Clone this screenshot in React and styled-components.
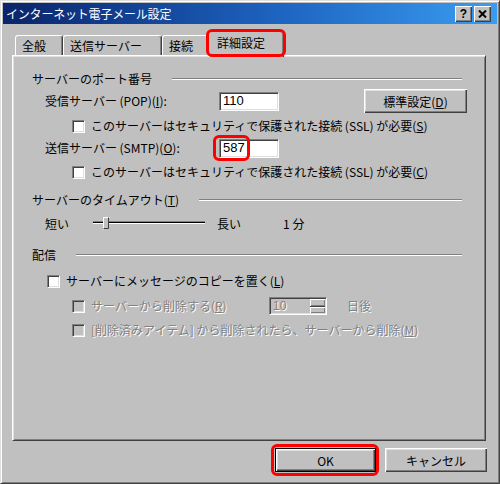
import React from 'react';
import styled, { createGlobalStyle } from 'styled-components';

const FONT = `"Noto Sans CJK JP", "Noto Sans", sans-serif`;

const GlobalStyle = createGlobalStyle`
  html, body {
    margin: 0;
    padding: 0;
    background: #c0c0c0;
  }
  body {
    font-family: ${FONT};
    font-size: 12px;
  }
`;

const Window = styled.div`
  box-sizing: border-box;
  width: 500px;
  height: 484px;
  background: #c0c0c0;
  border: 1px solid;
  border-color: #dfdfdf #404040 #404040 #dfdfdf;
  box-shadow: inset 1px 1px #fff, inset -1px -1px #808080;
  padding: 2px;
  display: flex;
  flex-direction: column;
  font-family: ${FONT};
  font-size: 12px;
  line-height: 16px;
  color: #000;
`;

const TitleBar = styled.div`
  height: 21px;
  flex-shrink: 0;
  display: flex;
  align-items: center;
  gap: 2px;
  padding: 0 6px 0 3px;
  background: linear-gradient(90deg, #0a246a 0%, #1d63c0 55%, #3a9cf0 100%);
  color: #fff;
`;

const TitleText = styled.span`
  flex: 1;
  letter-spacing: -0.2px;
`;

const CaptionButton = styled.div`
  box-sizing: border-box;
  width: 17px;
  height: 16px;
  display: flex;
  align-items: center;
  justify-content: center;
  background: #c0c0c0;
  color: #000;
  font-family: "Liberation Sans", Arial, sans-serif;
  font-weight: bold;
  font-size: 12px;
  box-shadow: inset 1px 1px #fff, inset -1px -1px #404040, inset -2px -2px #808080;
`;

const Content = styled.div`
  flex: 1;
  display: flex;
  flex-direction: column;
  padding: 7px 11px 0 9px;
`;

const TabRow = styled.div`
  position: relative;
  z-index: 1;
  height: 26px;
  margin-bottom: -2px;
  display: flex;
  align-items: flex-end;
  padding-left: 3px;
`;

const Tab = styled.div`
  position: relative;
  box-sizing: border-box;
  width: ${p => p.$w}px;
  height: ${p => (p.$active ? 26 : 20)}px;
  margin: 0 ${p => (p.$active ? -2 : 0)}px ${p => (p.$active ? 0 : 2)}px;
  padding: 0 0 ${p => (p.$active ? 4 : 0)}px ${p => (p.$active ? 8 : 6)}px;
  display: flex;
  align-items: center;
  background: #c0c0c0;
  border: 1px solid;
  border-bottom: none;
  border-color: #fff #404040 transparent #fff;
  border-radius: 3px 3px 0 0;
  box-shadow: inset -1px 0 #808080;
  white-space: nowrap;
  z-index: ${p => (p.$active ? 2 : 1)};

  ${p => p.$marked && `
    &::after {
      content: '';
      position: absolute;
      inset: -3px -3px 0 -3px;
      border: 3px solid #ff0000;
      border-radius: 6px;
    }
  `}
`;

const Panel = styled.div`
  box-sizing: border-box;
  height: 386px;
  flex-shrink: 0;
  display: flex;
  flex-direction: column;
  padding: 15px 23px 0 19px;
  border: 1px solid;
  border-color: #fff #404040 #404040 #fff;
  box-shadow: inset 1px 1px #dfdfdf, inset -1px -1px #808080;
`;

const GroupHeader = styled.div`
  display: flex;
  align-items: center;
  gap: 20px;
  height: 16px;
  margin-top: ${p => p.$mt || 0}px;
  white-space: nowrap;
`;

const Etch = styled.div`
  flex: 1;
  border-top: 1px solid #808080;
  border-bottom: 1px solid #fff;
`;

const Row = styled.div`
  display: flex;
  align-items: center;
  height: ${p => p.$h || 16}px;
  margin-top: ${p => p.$mt || 0}px;
  padding-left: ${p => p.$indent || 0}px;
  white-space: nowrap;
  color: ${p => (p.$disabled ? '#808080' : '#000')};
  text-shadow: ${p => (p.$disabled ? '1px 1px 0 #fff' : 'none')};
`;

const Label = styled.span`
  width: ${p => (p.$w ? `${p.$w}px` : 'auto')};
  flex-shrink: 0;
`;

const TextBox = styled.div`
  box-sizing: border-box;
  width: 60px;
  height: 19px;
  display: flex;
  align-items: center;
  padding-left: 3px;
  background: #fff;
  border: 1px solid;
  border-color: #808080 #fff #fff #808080;
  box-shadow: inset 1px 1px #404040, inset -1px -1px #dfdfdf;
  font-family: "Liberation Sans", Arial, sans-serif;
  font-size: 13px;
`;

const Highlight = styled.span`
  position: relative;
  display: inline-flex;

  &::after {
    content: '';
    position: absolute;
    inset: ${p => p.$inset};
    border: 3px solid #ff0000;
    border-radius: 6px;
    pointer-events: none;
  }
`;

const Button = styled.button`
  box-sizing: border-box;
  width: ${p => p.$w}px;
  height: 24px;
  margin: 0;
  padding: 0;
  background: #c0c0c0;
  color: #000;
  font-family: ${FONT};
  font-size: 12px;
  border: ${p => (p.$default ? '1px solid #000' : 'none')};
  box-shadow: inset 1px 1px #fff, inset -1px -1px #404040, inset -2px -2px #808080, inset 2px 2px #dfdfdf;
`;

const SideButton = styled(Button)`
  margin-left: auto;
  margin-right: -5px;
`;

const Check = styled.span`
  box-sizing: border-box;
  width: 13px;
  height: 13px;
  flex-shrink: 0;
  margin-right: 6px;
  background: ${p => (p.$disabled ? '#c0c0c0' : '#fff')};
  border: 1px solid;
  border-color: #808080 #fff #fff #808080;
  box-shadow: inset 1px 1px #404040, inset -1px -1px #dfdfdf;
`;

const SliderTrack = styled.svg`
  margin: 0 12px 0 24px;
  flex-shrink: 0;
`;

const Value = styled.span`
  margin-left: 42px;
`;

const Spin = styled.div`
  box-sizing: border-box;
  width: 58px;
  height: 18px;
  display: flex;
  background: #c0c0c0;
  border: 1px solid;
  border-color: #808080 #fff #fff #808080;
  box-shadow: inset 1px 1px #404040, inset -1px -1px #dfdfdf;
  padding: 1px 1px 1px 3px;
`;

const SpinText = styled.span`
  flex: 1;
  font-family: "Liberation Sans", Arial, sans-serif;
  font-size: 12px;
  line-height: 14px;
`;

const SpinButtons = styled.div`
  width: 15px;
  display: flex;
  flex-direction: column;
  background: #404040;
  gap: 1px;
`;

const SpinArrow = styled.div`
  flex: 1;
  background: #c0c0c0;
  box-shadow: inset 1px 1px #fff, inset -1px -1px #808080;
`;

const After = styled.span`
  margin-left: 20px;
`;

const Footer = styled.div`
  display: flex;
  justify-content: flex-end;
  gap: 9px;
  margin: 7px -1px 0 0;
`;

const App = () => (
  <>
    <GlobalStyle />
    <Window>
      <TitleBar>
        <TitleText>インターネット電子メール設定</TitleText>
        <CaptionButton>?</CaptionButton>
        <CaptionButton>
          <svg width="9" height="8" viewBox="0 0 9 8">
            <path d="M1 0.5 L8 7.5 M8 0.5 L1 7.5" stroke="#000" strokeWidth="2" />
          </svg>
        </CaptionButton>
      </TitleBar>

      <Content>
        <TabRow>
          <Tab $w={48}>全般</Tab>
          <Tab $w={99}>送信サーバー</Tab>
          <Tab $w={48}>接続</Tab>
          <Tab $w={76} $active $marked>詳細設定</Tab>
        </TabRow>

        <Panel>
          <GroupHeader>
            <Label>サーバーのポート番号</Label>
            <Etch />
          </GroupHeader>
          <Row $h={24} $mt={2} $indent={13}>
            <Label $w={174}>受信サーバー (POP)(<u>I</u>):</Label>
            <TextBox>110</TextBox>
            <SideButton $w={103}>標準設定(<u>D</u>)</SideButton>
          </Row>
          <Row $mt={5} $indent={40}>
            <Check />
            <Label>このサーバーはセキュリティで保護された接続 (SSL) が必要(<u>S</u>)</Label>
          </Row>
          <Row $h={20} $mt={4} $indent={13}>
            <Label $w={174}>送信サーバー (SMTP)(<u>O</u>):</Label>
            <Highlight $inset="-4px 29px -3px -6px">
              <TextBox>587</TextBox>
            </Highlight>
          </Row>
          <Row $mt={6} $indent={40}>
            <Check />
            <Label>このサーバーはセキュリティで保護された接続 (SSL) が必要(<u>C</u>)</Label>
          </Row>

          <GroupHeader $mt={12}>
            <Label>サーバーのタイムアウト(<u>T</u>)</Label>
            <Etch />
          </GroupHeader>
          <Row $mt={8} $indent={13}>
            <Label>短い</Label>
            <SliderTrack width="112" height="14" viewBox="0 0 112 14">
              <rect x="0" y="4" width="112" height="1" fill="#808080" />
              <rect x="0" y="5" width="112" height="1" fill="#000" />
              <rect x="0" y="6" width="112" height="1" fill="#fff" />
              <rect x="10" y="0" width="6" height="12" fill="#c0c0c0" />
              <path d="M10 12 V0 H16" stroke="#fff" fill="none" strokeWidth="1" transform="translate(0.5 0.5)" />
              <path d="M15 0 V11 H10" stroke="#404040" fill="none" strokeWidth="1" transform="translate(0.5 0.5)" />
            </SliderTrack>
            <Label>長い</Label>
            <Value>1 分</Value>
          </Row>

          <GroupHeader $mt={15}>
            <Label>配信</Label>
            <Etch />
          </GroupHeader>
          <Row $mt={10} $indent={15}>
            <Check />
            <Label>サーバーにメッセージのコピーを置く(<u>L</u>)</Label>
          </Row>
          <Row $h={18} $mt={8} $indent={40} $disabled>
            <Check $disabled />
            <Label $w={178}>サーバーから削除する(<u>R</u>)</Label>
            <Spin>
              <SpinText>10</SpinText>
              <SpinButtons>
                <SpinArrow />
                <SpinArrow />
              </SpinButtons>
            </Spin>
            <After>日後</After>
          </Row>
          <Row $mt={7} $indent={40} $disabled>
            <Check $disabled />
            <Label>[削除済みアイテム] から削除されたら、サーバーから削除(<u>M</u>)</Label>
          </Row>
        </Panel>

        <Footer>
          <Highlight $inset="-4px -3px -4px -4px">
            <Button $w={101} $default>OK</Button>
          </Highlight>
          <Button $w={102}>キャンセル</Button>
        </Footer>
      </Content>
    </Window>
  </>
);

export default App;
